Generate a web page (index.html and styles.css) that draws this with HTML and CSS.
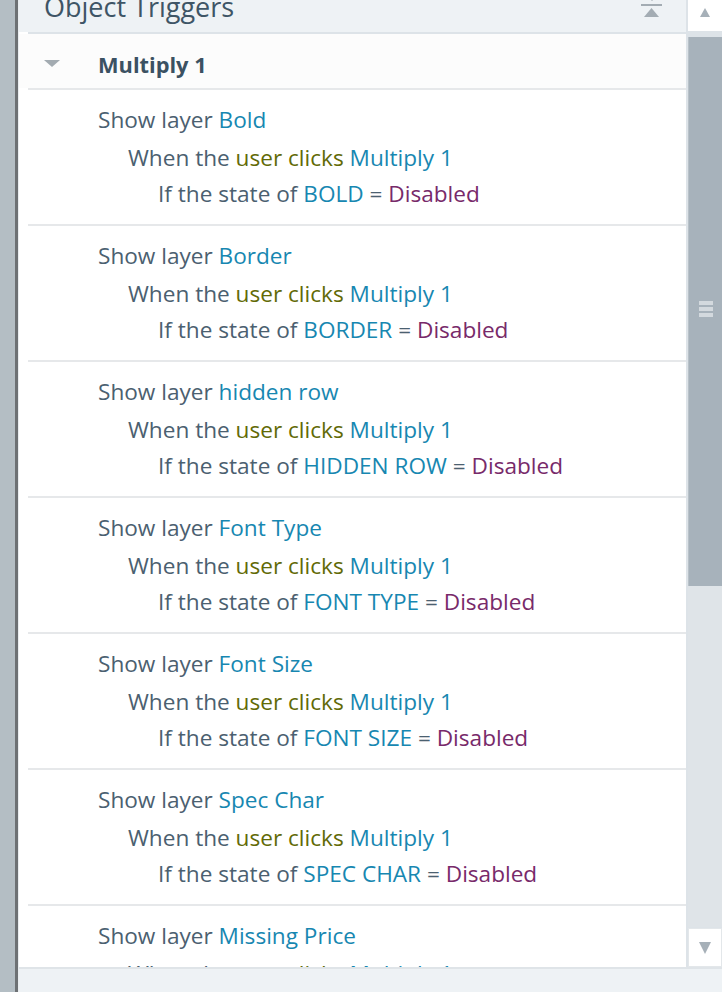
FILE: index.html
```html
<!DOCTYPE html>
<html>
<head>
<meta charset="utf-8">
<link rel="stylesheet" href="styles.css">
</head>
<body>
<div class="app">
  <div class="strip"></div>
  <div class="divider"></div>
  <div class="panel">
    <div class="main">
      <div class="content">
        <div class="header">
          <span class="title">Object Triggers</span>
          <svg class="collapse-icon" width="22" height="18" viewBox="0 0 22 18">
            <path d="M8 -2 L11 1 L14 -2 Z" fill="#a3acb3"/>
            <rect x="0" y="4" width="21" height="2" fill="#a3acb3"/>
            <path d="M3 17 L10.5 8 L18 17 Z" fill="#a3acb3"/>
          </svg>
        </div>
        <div class="rule rule-head"></div>
        <div class="group">
          <span class="chev"></span>
          <span class="group-name">Multiply 1</span>
        </div>
        <div class="rule"></div>

        <div class="trigger">
          <div class="l1">Show layer <span class="b">Bold</span></div>
          <div class="l2">When the <span class="o">user clicks</span> <span class="b">Multiply 1</span></div>
          <div class="l3">If the state of <span class="b">BOLD</span> = <span class="p">Disabled</span></div>
        </div>
        <div class="rule"></div>
        <div class="trigger">
          <div class="l1">Show layer <span class="b">Border</span></div>
          <div class="l2">When the <span class="o">user clicks</span> <span class="b">Multiply 1</span></div>
          <div class="l3">If the state of <span class="b">BORDER</span> = <span class="p">Disabled</span></div>
        </div>
        <div class="rule"></div>
        <div class="trigger">
          <div class="l1">Show layer <span class="b">hidden row</span></div>
          <div class="l2">When the <span class="o">user clicks</span> <span class="b">Multiply 1</span></div>
          <div class="l3">If the state of <span class="b">HIDDEN ROW</span> = <span class="p">Disabled</span></div>
        </div>
        <div class="rule"></div>
        <div class="trigger">
          <div class="l1">Show layer <span class="b">Font Type</span></div>
          <div class="l2">When the <span class="o">user clicks</span> <span class="b">Multiply 1</span></div>
          <div class="l3">If the state of <span class="b">FONT TYPE</span> = <span class="p">Disabled</span></div>
        </div>
        <div class="rule"></div>
        <div class="trigger">
          <div class="l1">Show layer <span class="b">Font Size</span></div>
          <div class="l2">When the <span class="o">user clicks</span> <span class="b">Multiply 1</span></div>
          <div class="l3">If the state of <span class="b">FONT SIZE</span> = <span class="p">Disabled</span></div>
        </div>
        <div class="rule"></div>
        <div class="trigger">
          <div class="l1">Show layer <span class="b">Spec Char</span></div>
          <div class="l2">When the <span class="o">user clicks</span> <span class="b">Multiply 1</span></div>
          <div class="l3">If the state of <span class="b">SPEC CHAR</span> = <span class="p">Disabled</span></div>
        </div>
        <div class="rule"></div>
        <div class="trigger">
          <div class="l1">Show layer <span class="b">Missing Price</span></div>
          <div class="l2">When the <span class="o">user clicks</span> <span class="b">Multiply 1</span></div>
          <div class="l3">If the state of <span class="b">MISSING PRICE</span> = <span class="p">Disabled</span></div>
        </div>
      </div>
      <div class="scrollbar">
        <div class="sb-btn sb-up"><span class="tri-up"></span></div>
        <div class="sb-gap"></div>
        <div class="sb-thumb">
          <div class="grip"><span></span><span></span><span></span></div>
        </div>
        <div class="sb-track"></div>
        <div class="sb-btn sb-down"><span class="tri-down"></span></div>
      </div>
    </div>
    <div class="footer"></div>
  </div>
</div>
</body>
</html>
```

FILE: styles.css
```css
* { box-sizing: border-box; }
html, body {
  margin: 0;
  padding: 0;
  width: 722px;
  height: 992px;
  overflow: hidden;
  background: #ffffff;
  font-family: "Open Sans", "Noto Sans", sans-serif;
}
.app {
  display: flex;
  width: 722px;
  height: 992px;
}
.strip {
  width: 15px;
  background: #b4bec4;
}
.divider {
  width: 3px;
  background: #6d7174;
}
.panel {
  flex: 1;
  display: flex;
  flex-direction: column;
  border-left: 1px solid #e9edf0;
  min-width: 0;
}
.main {
  height: 967px;
  flex: none;
  display: flex;
  overflow: hidden;
}
.content {
  flex: 1;
  min-width: 0;
  display: flex;
  flex-direction: column;
  overflow: hidden;
  background: #ffffff;
}
.header {
  height: 32px;
  flex: none;
  background: #eef2f5;
  display: flex;
  align-items: flex-start;
  justify-content: space-between;
  padding-left: 25px;
  padding-right: 23px;
  overflow: hidden;
}
.title {
  font-size: 27px;
  line-height: 34px;
  margin-top: -10px;
  color: #3e5566;
  white-space: nowrap;
}
.collapse-icon {
  display: block;
  margin-top: 0;
}
.rule {
  flex: none;
  height: 2px;
  margin-left: 9px;
  background: #e6e8ea;
}
.rule-head {
  background: #dde3e8;
}
.group {
  flex: none;
  height: 54px;
  background: #fcfcfc;
  display: flex;
  align-items: center;
  padding-top: 6px;
}
.chev {
  width: 0;
  height: 0;
  border-left: 8px solid transparent;
  border-right: 8px solid transparent;
  border-top: 7px solid #a3abb1;
  margin-left: 25px;
  margin-right: 38px;
  margin-top: -1px;
}
.group-name {
  font-weight: 700;
  font-size: 21.8px;
  color: #3b5162;
  white-space: nowrap;
}
.trigger {
  flex: none;
  height: 134px;
  padding-top: 12px;
  color: #4b6070;
  font-size: 22.6px;
  white-space: nowrap;
}
.l1, .l2, .l3 {
  height: 36px;
  line-height: 36px;
}
.l1 { padding-left: 79px; }
.l2 { padding-left: 109px; margin-top: 2px; }
.l3 { padding-left: 139px; }
.b { color: #1787b1; }
.o { color: #626a06; }
.p { color: #782a6a; }

.scrollbar {
  width: 36px;
  flex: none;
  display: flex;
  flex-direction: column;
  background: #dde3e8;
  padding-left: 2px;
}
.sb-btn {
  background: #ffffff;
  display: flex;
  align-items: center;
  justify-content: center;
}
.sb-up {
  height: 31px;
  padding-bottom: 6px;
}
.sb-gap {
  height: 6px;
}
.sb-thumb {
  height: 549px;
  background: #a7b2bb;
  border-left: 1px solid #b8c1c8;
  display: flex;
  align-items: center;
  justify-content: center;
  padding-top: 8px;
}
.grip {
  display: flex;
  flex-direction: column;
  gap: 2px;
  margin-top: -13px;
}
.grip span {
  display: block;
  width: 14px;
  height: 4px;
  background: #d3d9de;
}
.sb-track {
  flex: 1;
  background: #dfe4e8;
}
.sb-down {
  height: 39px;
  border: 1px solid #e3e7ea;
  margin-top: 1px;
}
.tri-up {
  width: 0;
  height: 0;
  border-left: 5.5px solid transparent;
  border-right: 5.5px solid transparent;
  border-bottom: 9px solid #a6b0b8;
}
.tri-down {
  width: 0;
  height: 0;
  border-left: 6px solid transparent;
  border-right: 6px solid transparent;
  border-top: 12px solid #a6b0b8;
}
.footer {
  flex: 1;
  background: #eef2f5;
  border-top: 2px solid #dfe4e8;
}
```
